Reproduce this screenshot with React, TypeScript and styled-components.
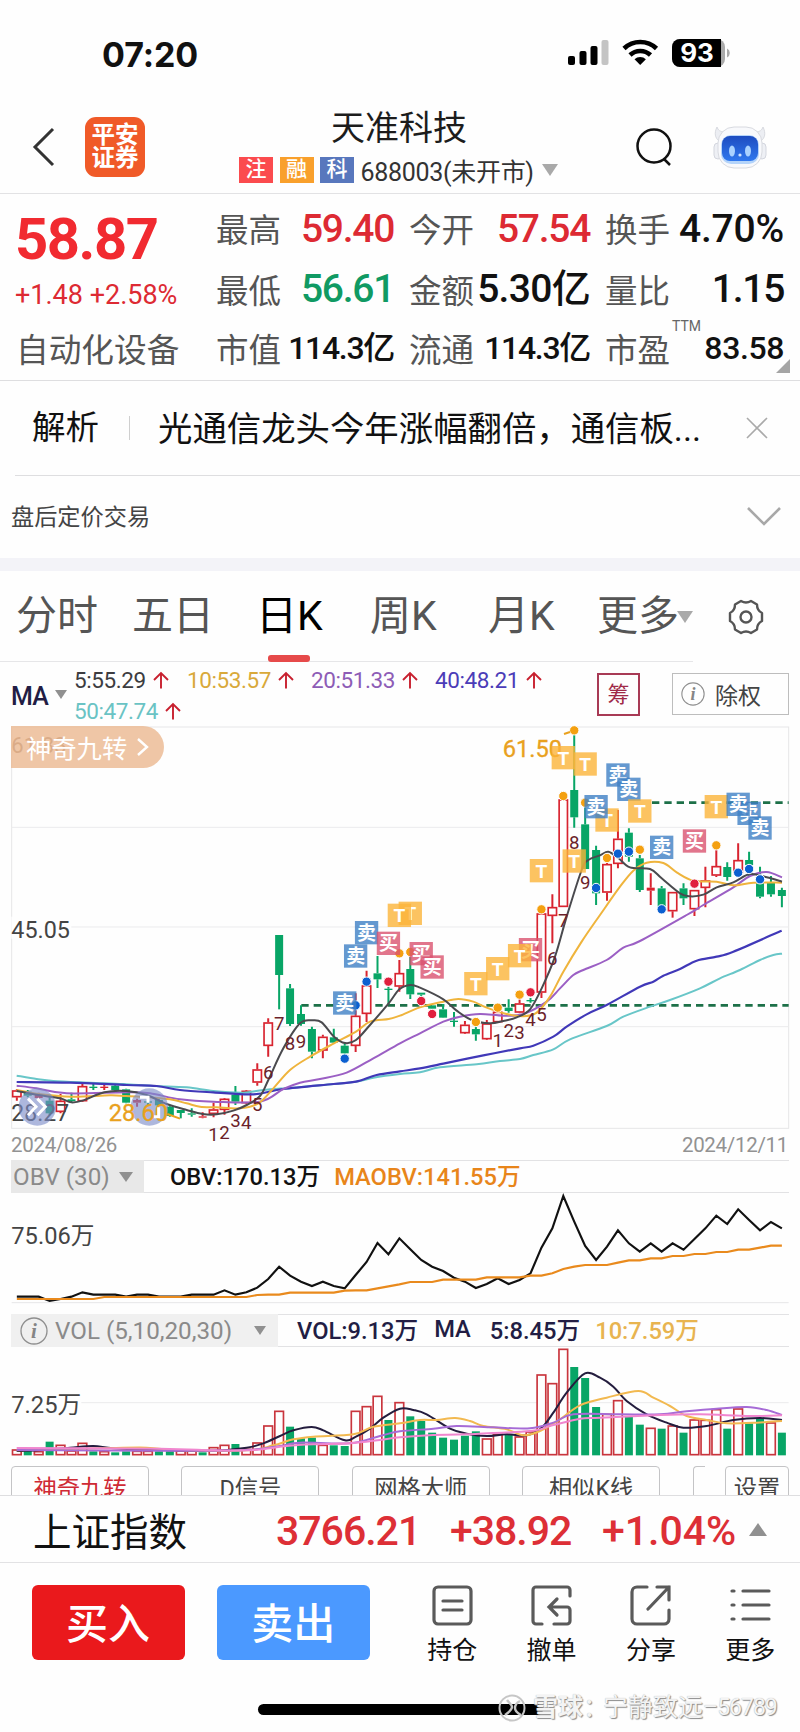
import { ReactNode } from 'react';
import styled, { createGlobalStyle } from 'styled-components';

const RED = '#d8232f';
const GREEN = '#08a566';

type Point = [number, number];
// kind, open/close body top, body bottom, wick top, wick bottom
type Candle = ['r' | 'g', number, number, number, number];

// charts are drawn in thirds of a pixel
const cx = (i: number) => 50.5 + 32.8 * i - i * 0.012;

const candles: Candle[] = [
  ['r', 1291, 1312, 1288, 1322],
  ['g', 1295, 1307, 1290, 1312],
  ['r', 1304, 1314, 1298, 1320],
  ['g', 1322, 1360, 1312, 1366],
  ['r', 1322, 1356, 1302, 1360],
  ['g', 1318, 1323, 1298, 1326],
  ['r', 1278, 1324, 1268, 1326],
  ['g', 1280, 1284, 1272, 1290],
  ['r', 1280, 1284, 1270, 1290],
  ['g', 1277, 1290, 1273, 1293],
  ['g', 1288, 1328, 1286, 1330],
  ['r', 1320, 1328, 1316, 1340],
  ['g', 1324, 1328, 1318, 1338],
  ['g', 1320, 1336, 1314, 1338],
  ['g', 1340, 1368, 1336, 1370],
  ['g', 1350, 1359, 1350, 1375],
  ['g', 1360, 1364, 1345, 1370],
  ['r', 1369, 1373, 1357, 1375],
  ['r', 1348, 1362, 1328, 1372],
  ['r', 1316, 1350, 1314, 1364],
  ['g', 1304, 1325, 1278, 1335],
  ['r', 1292, 1330, 1290, 1332],
  ['r', 1228, 1268, 1210, 1277],
  ['r', 1087, 1158, 1075, 1190],
  ['g', 825, 945, 825, 1048],
  ['g', 985, 1092, 972, 1098],
  ['g', 1062, 1092, 1036, 1097],
  ['g', 1107, 1175, 1100, 1195],
  ['r', 1130, 1172, 1124, 1195],
  ['g', 1132, 1148, 1106, 1150],
  ['g', 1157, 1180, 1150, 1196],
  ['r', 1067, 1158, 1000, 1176],
  ['r', 976, 1062, 932, 1086],
  ['g', 940, 958, 888, 984],
  ['g', 986, 990, 980, 1034],
  ['r', 939, 980, 900, 995],
  ['g', 927, 1003, 880, 1017],
  ['g', 998, 1004, 998, 1020],
  ['g', 1036, 1046, 1036, 1060],
  ['g', 1048, 1073, 1032, 1074],
  ['g', 1082, 1086, 1056, 1100],
  ['r', 1094, 1120, 1083, 1122],
  ['g', 1107, 1123, 1090, 1142],
  ['r', 1090, 1138, 1080, 1140],
  ['r', 1055, 1087, 1044, 1088],
  ['g', 1043, 1053, 1018, 1058],
  ['r', 1030, 1058, 1010, 1060],
  ['g', 1020, 1023, 1014, 1028],
  ['r', 760, 998, 760, 1014],
  ['r', 741, 768, 703, 850],
  ['r', 418, 741, 418, 741],
  ['g', 390, 472, 215, 503],
  ['g', 493, 627, 428, 627],
  ['g', 570, 700, 557, 735],
  ['r', 612, 698, 600, 722],
  ['r', 536, 612, 450, 625],
  ['g', 518, 590, 505, 605],
  ['g', 595, 690, 585, 696],
  ['r', 683, 692, 640, 735],
  ['g', 685, 740, 678, 748],
  ['r', 696, 754, 696, 773],
  ['g', 685, 715, 670, 735],
  ['r', 690, 748, 690, 768],
  ['r', 661, 684, 620, 742],
  ['r', 618, 647, 565, 651],
  ['g', 621, 651, 607, 662],
  ['r', 600, 640, 550, 642],
  ['g', 600, 615, 575, 650],
  ['g', 670, 710, 620, 715],
  ['g', 669, 703, 648, 710],
  ['g', 690, 708, 683, 742],
];

const ma5: Point[] = [
  [50, 1293], [115, 1305], [180, 1315], [214, 1327], [250, 1321], [313, 1297], [378, 1293], [440, 1305],
  [500, 1332], [560, 1350], [608, 1362], [650, 1363], [700, 1352], [740, 1335], [780, 1308], [805, 1260],
  [850, 1165], [900, 1090], [937, 1081], [965, 1087], [1002, 1130], [1035, 1149], [1068, 1140], [1110, 1095],
  [1166, 1030], [1198, 988], [1231, 975], [1260, 983], [1330, 1018], [1370, 1052], [1415, 1080], [1470, 1090],
  [1510, 1083], [1550, 1072], [1590, 1048], [1625, 985], [1665, 890], [1700, 770], [1745, 630], [1765, 600],
  [1800, 586], [1825, 575], [1855, 594], [1890, 622], [1950, 627], [1985, 655], [2040, 700], [2070, 709],
  [2110, 704], [2150, 682], [2200, 667], [2250, 642], [2300, 652], [2346, 665],
];
const ma10: Point[] = [
  [50, 1290], [115, 1302], [215, 1310], [330, 1306], [378, 1308], [450, 1312], [510, 1318], [560, 1330],
  [600, 1340], [650, 1342], [720, 1345], [775, 1330], [820, 1285], [870, 1230], [930, 1190], [1002, 1150],
  [1068, 1115], [1110, 1085], [1166, 1077], [1200, 1067], [1260, 1042], [1330, 1025], [1375, 1017], [1420, 1025],
  [1460, 1043], [1520, 1062], [1570, 1069], [1610, 1058], [1650, 1010], [1690, 935], [1745, 845], [1800, 765],
  [1860, 680], [1900, 632], [1940, 608], [1990, 609], [2030, 637], [2080, 662], [2150, 665], [2200, 676],
  [2260, 668], [2346, 668],
];
const ma20: Point[] = [
  [50, 1277], [110, 1285], [200, 1300], [380, 1297], [450, 1300], [540, 1318], [640, 1325], [780, 1325],
  [850, 1287], [900, 1268], [960, 1257], [1040, 1238], [1120, 1195], [1200, 1150], [1260, 1120], [1330, 1085],
  [1380, 1070], [1440, 1062], [1510, 1067], [1570, 1062], [1640, 1025], [1680, 985], [1720, 945], [1750, 930],
  [1820, 900], [1870, 863], [1920, 843], [2060, 765], [2110, 735], [2200, 682], [2250, 648], [2300, 636], [2346, 652],
];
const ma40: Point[] = [
  [50, 1266], [210, 1268], [380, 1275], [470, 1278], [540, 1290], [640, 1297], [760, 1303], [850, 1287],
  [1000, 1272], [1068, 1265], [1130, 1245], [1200, 1234], [1260, 1225], [1330, 1211], [1450, 1186], [1560, 1165],
  [1600, 1157], [1660, 1130], [1700, 1100], [1760, 1063], [1820, 1035], [1920, 980], [1960, 965], [1990, 947],
  [2040, 927], [2090, 902], [2150, 890], [2200, 875], [2345, 812],
];
const ma50: Point[] = [
  [50, 1247], [110, 1257], [160, 1263], [270, 1268], [370, 1272], [460, 1278], [560, 1282], [640, 1293],
  [730, 1298], [790, 1290], [880, 1283], [960, 1276], [1068, 1265], [1120, 1253], [1200, 1242], [1260, 1237],
  [1320, 1222], [1430, 1213], [1500, 1203], [1560, 1197], [1600, 1185], [1660, 1168], [1710, 1138], [1820, 1098],
  [1870, 1070], [1950, 1040], [2010, 1020], [2100, 985], [2160, 955], [2220, 930], [2280, 900], [2320, 885], [2346, 881],
];

const dots: [number, number, string][] = [
  [30, 1196, 'b'], [31, 1036, 'b'], [32, 965, 'b'], [34, 965, 'r'], [35, 880, 'y'], [36, 876, 'y'],
  [37, 1023, 'r'], [38, 1062, 'r'], [42, 1086, 'y'], [44, 1043, 'y'], [46, 1004, 'y'], [47, 997, 'r'],
  [48, 748, 'y'], [50, 408, 'y'], [51, 211, 'y'], [52, 428, 'y'], [53, 684, 'b'], [54, 594, 'y'],
  [55, 581, 'b'], [56, 575, 'b'], [57, 569, 'y'], [59, 748, 'b'], [62, 671, 'r'], [64, 556, 'y'],
  [66, 638, 'b'], [67, 627, 'b'], [68, 658, 'b'],
];
const dotColor: Record<string, string> = { b: '#0b5fd0', r: '#e01f3d', y: '#f4a010' };

const flags: [number, number, string][] = [
  [30, 1029, '卖'], [31, 888, '卖'], [32, 818, '卖'], [36, 760, 'T'], [35, 766, 'T'], [34, 850, '买'],
  [37, 881, '买'], [38, 921, '买'], [42, 971, 'T'], [44, 926, 'T'], [47, 869, '买'], [46, 887, 'T'],
  [48, 632, 'T'], [50, 293, 'T'], [51, 603, 'T'], [52, 312, 'T'], [54, 480, 'T'], [53, 440, '卖'],
  [55, 345, '卖'], [56, 388, '卖'], [57, 453, 'T'], [59, 562, '卖'], [62, 543, '买'], [64, 440, 'T'],
  [67, 460, '卖'], [66, 433, '卖'], [68, 504, '卖'],
];
const flagColor: Record<string, string> = { 卖: '#3f80c4', 买: '#d9536f', T: '#fbb43a' };

const counts: [number, number, number][] = [
  [18, 1424, 1], [19, 1417, 2], [20, 1380, 3], [21, 1387, 4], [22, 1332, 5], [23, 1238, 6], [24, 1091, 7],
  [25, 1150, 8], [26, 1143, 9], [44, 1141, 1], [45, 1110, 2], [46, 1116, 3], [47, 1078, 4], [48, 1062, 5],
  [49, 895, 6], [50, 780, 7], [51, 548, 8], [52, 668, 9],
];

const obv = [
  440, 440, 440, 453, 447, 440, 427, 434, 434, 434, 440, 434, 434, 440, 440, 440, 434, 434, 434, 421, 434, 427,
  413, 387, 350, 377, 395, 408, 395, 408, 415, 375, 336, 279, 313, 265, 298, 330, 350, 363, 383, 395, 414, 402,
  385, 402, 390, 370, 293, 235, 138, 215, 288, 330, 290, 241, 280, 305, 280, 305, 280, 299, 267, 235, 197, 222,
  178, 210, 241, 216, 235,
];
const maobv = [
  447, 447, 447, 447, 447, 447, 447, 447, 441, 441, 441, 441, 441, 441, 441, 441, 441, 441, 441, 441, 441, 441,
  435, 434, 434, 428, 428, 428, 428, 428, 422, 421, 421, 415, 409, 403, 396, 396, 396, 389, 389, 389, 389, 382,
  382, 382, 382, 377, 377, 370, 357, 350, 345, 345, 345, 338, 331, 331, 325, 325, 318, 318, 312, 312, 306, 306,
  299, 299, 293, 287, 287,
];

const volumes =
  'r902 g905 r907 g877 r888 r905 r882 g906 r907 g909 g906 r906 r906 g906 g906 r905 r905 g909 r895 r888 g884 r900 r881 r830 r786 g832 g867 g865 r888 g888 g890 r786 r772 r741 g812 r760 g801 g815 g850 g865 g871 g859 g846 r869 r855 g855 r863 r848 r677 r703 r600 g653 g686 g773 r795 r754 g802 g826 r837 g838 r830 g850 r812 r813 r781 g838 r779 g822 g807 r821 g850'
    .split(' ')
    .map((v) => ({ up: v[0] === 'r', top: Number(v.slice(1)) }));

const vol5: Point[] = [
  [50, 905], [115, 903], [210, 895], [280, 890], [340, 897], [460, 902], [640, 904], [740, 895], [790, 882],
  [840, 860], [880, 843], [935, 833], [970, 843], [1035, 873], [1068, 862], [1110, 838], [1150, 805], [1200, 778],
  [1240, 782], [1280, 795], [1350, 838], [1400, 853], [1460, 860], [1520, 855], [1580, 858], [1625, 835],
  [1660, 790], [1700, 730], [1755, 672], [1800, 685], [1840, 712], [1880, 755], [1940, 795], [2000, 820],
  [2050, 835], [2120, 830], [2200, 812], [2280, 806], [2346, 812],
];
const vol10: Point[] = [
  [50, 903], [300, 897], [440, 895], [540, 903], [740, 903], [820, 888], [880, 870], [940, 862], [1060, 855],
  [1120, 832], [1200, 822], [1260, 812], [1310, 812], [1365, 806], [1410, 815], [1450, 830], [1520, 840],
  [1570, 858], [1620, 845], [1680, 810], [1740, 768], [1820, 745], [1915, 725], [1960, 745], [2010, 770],
  [2060, 800], [2120, 812], [2180, 822], [2270, 820], [2346, 815],
];
const vol20: Point[] = [
  [50, 902], [540, 904], [740, 902], [840, 890], [900, 880], [1050, 882], [1140, 860], [1200, 846], [1300, 838],
  [1370, 830], [1480, 834], [1590, 837], [1660, 820], [1720, 795], [1860, 795], [1980, 795], [2060, 786],
  [2150, 778], [2240, 773], [2300, 782], [2346, 797],
];
const vol30: Point[] = [
  [50, 896], [480, 898], [640, 903], [760, 902], [860, 890], [940, 885], [1050, 882], [1140, 872], [1200, 864],
  [1300, 857], [1400, 855], [1590, 845], [1650, 830], [1740, 808], [1800, 805], [1980, 797], [2100, 795],
  [2250, 800], [2346, 798],
];

const smooth = (p: Point[]) => {
  let d = `M${p[0][0]} ${p[0][1]}`;
  for (let i = 0; i < p.length - 1; i++) {
    const a = p[i - 1] || p[i];
    const b = p[i];
    const c = p[i + 1];
    const e = p[i + 2] || c;
    d += `C${b[0] + (c[0] - a[0]) / 6} ${b[1] + (c[1] - a[1]) / 6} ${c[0] - (e[0] - b[0]) / 6} ${c[1] - (e[1] - b[1]) / 6} ${c[0]} ${c[1]}`;
  }
  return d;
};
const poly = (ys: number[]) => ys.map((y, i) => `${cx(i)},${y}`).join(' ');

const stats = [
  { label: '最高', value: '59.40', color: '#dd2a33' },
  { label: '今开', value: '57.54', color: '#dd2a33' },
  { label: '换手', value: '4.70%', spacing: -0.2 },
  { label: '最低', value: '56.61', color: '#109a63' },
  { label: '金额', value: '5.30亿', spacing: -0.7 },
  { label: '量比', value: '1.15' },
  { label: '市值', value: '114.3亿', small: true },
  { label: '流通', value: '114.3亿', small: true },
  { label: '市盈', value: '83.58', small: true, spacing: -0.4, sup: 'TTM' },
];

export default function App() {
  return (
    <Page>
      <GlobalStyle />
      <StatusBar>
        <Clock>07:20</Clock>
        <StatusIcons />
      </StatusBar>
      <Header>
        <svg width='24' height='40' viewBox='0 0 24 40' fill='none' stroke='#333' strokeWidth='3'>
          <path d='M21 2 3 20l18 18' />
        </svg>
        <Logo>
          平安
          <br />
          证券
        </Logo>
        <TitleBox>
          <Title>天准科技</Title>
          <SubTitle>
            <Tag $bg='#fb4b4e'>注</Tag>
            <Tag $bg='#f9a02c'>融</Tag>
            <Tag $bg='#5877bd'>科</Tag>
            <Code>688003(未开市)</Code>
            <Caret $size={8} />
          </SubTitle>
        </TitleBox>
        <HeaderTools>
          <SearchIcon />
          <Robot />
        </HeaderTools>
      </Header>

      <Quote>
        <QuoteLeft>
          <Price>58.87</Price>
          <Change>+1.48 +2.58%</Change>
          <Industry>自动化设备</Industry>
        </QuoteLeft>
        <StatGrid>
          {stats.map((s, i) => (
            <Stat key={i}>
              <StatLabel>
                {s.label}
                {s.sup && <Sup>{s.sup}</Sup>}
              </StatLabel>
              <StatValue $color={s.color} $small={s.small} $spacing={s.spacing}>
                {s.value}
              </StatValue>
            </Stat>
          ))}
        </StatGrid>
        <Corner />
      </Quote>

      <News>
        <NewsLabel>解析</NewsLabel>
        <NewsText>光通信龙头今年涨幅翻倍，通信板...</NewsText>
        <svg width='22' height='22' viewBox='0 0 22 22' stroke='#aaa' strokeWidth='1.6'>
          <path d='M1 1l20 20M21 1 1 21' />
        </svg>
      </News>
      <AfterHours>
        <span>盘后定价交易</span>
        <svg width='34' height='20' viewBox='0 0 34 20' fill='none' stroke='#a8a8a8' strokeWidth='2.6'>
          <path d='M1 1l16 16L33 1' />
        </svg>
      </AfterHours>

      <Tabs>
        <Tab $w={116}>分时</Tab>
        <Tab $w={124}>五日</Tab>
        <Tab $w={114} $active>
          日K
        </Tab>
        <Tab $w={118}>周K</Tab>
        <Tab $w={109}>月K</Tab>
        <Tab $w={80}>更多</Tab>
        <Caret $size={8} />
        <Gear />
      </Tabs>

      <MaRow>
        <MaName>MA</MaName>
        <Caret $size={6} $dark />
        <MaList>
          <MaItem $color='#3c3c40' $w={113}>5:55.29<Arrow /></MaItem>
          <MaItem $color='#d9a93a' $w={124}>10:53.57<Arrow /></MaItem>
          <MaItem $color='#8d5cb6' $w={124}>20:51.33<Arrow /></MaItem>
          <MaItem $color='#4b3cb8' $w={110}>40:48.21<Arrow /></MaItem>
          <MaItem $color='#6ac3c4' $w={114}>50:47.74<Arrow /></MaItem>
        </MaList>
        <ChipButton>筹</ChipButton>
        <RightsButton>
          <Info size={24} />
          除权
        </RightsButton>
      </MaRow>

      <ChartBox>
        <KChart />
        <Pill>
          神奇九转
          <svg width='12' height='20' viewBox='0 0 12 20' fill='none' stroke='#fff' strokeWidth='2.4'>
            <path d='M1 2l9 8-9 8' />
          </svg>
        </Pill>
      </ChartBox>
      <Dates>
        <span>2024/08/26</span>
        <span>2024/12/11</span>
      </Dates>

      <IndicatorBar>
        <IndicatorName $w={133} $bg='#e8e8e8'>
          <NameText $x={2} $w={106}>OBV (30)</NameText>
          <Caret $size={7} $dark />
        </IndicatorName>
        <IndicatorValue $color='#111' $ml={26}>OBV:170.13万</IndicatorValue>
        <IndicatorValue $color='#e8851a' $ml={14}>MAOBV:141.55万</IndicatorValue>
      </IndicatorBar>
      <ObvChart />
      <IndicatorBar>
        <IndicatorName $w={267} $bg='#f0f0f0'>
          <InfoWrap><Info size={28} /></InfoWrap>
          <NameText $x={7} $w={199}>VOL (5,10,20,30)</NameText>
          <Caret $size={6} $dark />
        </IndicatorName>
        <IndicatorValue $color='#221d44' $ml={19}>VOL:9.13万</IndicatorValue>
        <IndicatorValue $color='#221d44' $ml={16}>MA</IndicatorValue>
        <IndicatorValue $color='#221d44' $ml={19}>5:8.45万</IndicatorValue>
        <IndicatorValue $color='#e8b450' $ml={15}>10:7.59万</IndicatorValue>
      </IndicatorBar>
      <VolChart />

      <Shortcuts>
        <Shortcut $red>神奇九转</Shortcut>
        <Shortcut>D信号</Shortcut>
        <Shortcut>网格大师</Shortcut>
        <Shortcut>相似K线</Shortcut>
        <ShortcutCut />
        <Shortcut $w={64}>设置</Shortcut>
      </Shortcuts>

      <IndexBar>
        <IndexName>上证指数</IndexName>
        <IndexValue $w={174}>3766.21</IndexValue>
        <IndexValue $w={152}>+38.92</IndexValue>
        <IndexValue $w={147} $wide>
          +1.04%
        </IndexValue>
        <Caret $size={9} $up $dark />
      </IndexBar>

      <Actions>
        <TradeButton $bg='#ea191c'>买入</TradeButton>
        <TradeButton $bg='#4b99ff'>卖出</TradeButton>
        <ActionList>
          <Action label='持仓'>
            <rect x='2' y='2' width='37' height='37' rx='4' />
            <path d='M11 16h19M11 25h19' />
          </Action>
          <Action label='撤单'>
            <path d='M39 11V5a3 3 0 0 0-3-3H5a3 3 0 0 0-3 3v31a3 3 0 0 0 3 3h6M26 14l-8 8 8 8M18 22h18a3 3 0 0 1 3 3v11a3 3 0 0 1-3 3H23' />
          </Action>
          <Action label='分享'>
            <path d='M17 2H7a5 5 0 0 0-5 5v27a5 5 0 0 0 5 5h27a5 5 0 0 0 5-5V25M18 24 39 2M27 2h12v13' />
          </Action>
          <Action label='更多'>
            <path d='M2 6h2M13 6h26M2 20h2M13 20h26M2 34h2M13 34h26' />
          </Action>
        </ActionList>
      </Actions>

      <Footer>
        <HomeBar />
        <Watermark>
          <svg width='30' height='28' viewBox='0 0 30 28' fill='none' stroke='#c6c6c6' strokeWidth='2'>
            <circle cx='14' cy='14' r='12.5' />
            <path d='M9 6c2 3 5 4 5 7s-3 5-7 8M22 7c-4 2-5 4-5 7s2 5 6 7' strokeWidth='2.4' />
          </svg>
          <b>雪球</b>：<em>宁静致远</em>
          <small>–56789</small>
        </Watermark>
      </Footer>
    </Page>
  );
}

const StatusIcons = () => (
  <svg width='164' height='30' viewBox='0 0 164 30'>
    <rect x='1' y='17' width='7' height='9' rx='2' />
    <rect x='12.5' y='12' width='7' height='14' rx='2' />
    <rect x='23.5' y='7' width='7' height='19' rx='2' />
    <rect x='34.5' y='1' width='7' height='25' rx='2' fill='#c4c4c4' />
    <g fill='none' stroke='#000' strokeWidth='4.6'>
      <path d='M57 9.5a23.5 23.5 0 0 1 32.5 0' />
      <path d='M63 16a15 15 0 0 1 20.5 0' />
    </g>
    <path d='M73.2 26l-5.7-5.8a8.2 8.2 0 0 1 11.4 0z' />
    <rect x='105' y='0' width='53' height='28' rx='8' fill='#aaa' />
    <path d='M113 0h41v28h-41a8 8 0 0 1-8-8V8a8 8 0 0 1 8-8z' />
    <path d='M160 9.5a5 5 0 0 1 0 9z' fill='#aaa' />
    <text x='130' y='23' fontSize='26' fontWeight='700' fill='#fff' textAnchor='middle' fontFamily='Inter'>
      93
    </text>
  </svg>
);

const SearchIcon = () => (
  <svg width='38' height='42' viewBox='0 0 38 42' fill='none' stroke='#111' strokeWidth='2.5'>
    <circle cx='18' cy='20' r='16.5' />
    <path d='M28 33l6 6' />
  </svg>
);

const Robot = () => (
  <svg width='54' height='44' viewBox='0 0 54 44'>
    <defs>
      <linearGradient id='face' x1='0' y1='0' x2='0' y2='1'>
        <stop offset='0' stopColor='#1d4cc0' />
        <stop offset='1' stopColor='#2f78ee' />
      </linearGradient>
    </defs>
    <path d='M4 2c-3 6-2 11 2 14l6-9C7 7 5 5 4 2zM50 2c3 6 2 11-2 14l-6-9c5 0 7-2 8-5z' fill='#eceef3' stroke='#d8dae0' />
    <rect x='1' y='18' width='8' height='16' rx='4' fill='#eef0f5' stroke='#d3d6de' />
    <rect x='45' y='18' width='8' height='16' rx='4' fill='#eef0f5' stroke='#d3d6de' />
    <rect x='5' y='2' width='44' height='41' rx='16' fill='#f8f9fc' stroke='#d8dae0' />
    <rect x='8' y='10' width='38' height='29' rx='10' fill='#b4d4fa' />
    <rect x='9' y='11' width='36' height='25' rx='8' fill='url(#face)' />
    <ellipse cx='19' cy='26' rx='3' ry='5.5' fill='#a9d2ff' />
    <ellipse cx='35' cy='26' rx='3' ry='5.5' fill='#a9d2ff' />
    <circle cx='27' cy='30' r='1.6' fill='#cfe4ff' />
  </svg>
);

const Gear = () => (
  <GearSvg width='38' height='38' viewBox='0 0 38 38' fill='none' stroke='#555' strokeWidth='2.4' strokeLinejoin='round'>
    <path d='M14 3q5 3 10 0l6 3.5q0 6 5 8.5v8q-5 2.5-5 8.5L24 35q-5-3-10 0l-6-3.5q0-6-5-8.5v-8q5-2.5 5-8.5z' />
    <circle cx='19' cy='19' r='5.5' />
  </GearSvg>
);

const Arrow = () => (
  <svg width='16' height='18' viewBox='0 0 16 18' fill='none' stroke='#c8202f' strokeWidth='1.9'>
    <path d='M8 17.5V2M1 9 8 2l7 7' />
  </svg>
);

const Info = ({ size }: { size: number }) => (
  <svg width={size} height={size} viewBox='0 0 28 28' fill='none' stroke='#8f8f8f'>
    <circle cx='14' cy='14' r='13' strokeWidth='1.3' />
    <text x='14' y='21' fontSize='21' fontStyle='italic' fontWeight='700' textAnchor='middle' fontFamily='Liberation Serif' fill='#858585' stroke='none'>
      i
    </text>
  </svg>
);

const Action = ({ label, children }: { label: string; children: ReactNode }) => (
  <ActionItem>
    <svg width='41' height='41' viewBox='0 0 41 41' fill='none' stroke='#5a5a5a' strokeWidth='3.2' strokeLinecap='round'>
      {children}
    </svg>
    {label}
  </ActionItem>
);

const KChart = () => (
  <ChartSvg width='800' height='404' viewBox='0 198 2400 1212' fill='none'>
    <rect x='35' y='201' width='2331' height='1204' stroke='#e6e6e8' strokeWidth='3' />
    <path d='M35 502H2366M35 801H2366M35 1100H2366' stroke='#ebebed' strokeWidth='3' />
    <text x='34' y='280' fontSize='66' fill='#8a6a55'>61.83</text>
    <rect x='34' y='770' width='180' height='66' fill='#fefefe' />
    <text x='34' y='833' fontSize='70' fill='#444'>45.05</text>
    <path d='M904 1036H2366M1956 428H2366' stroke='#1d7048' strokeWidth='8' strokeDasharray='22 15' />
    {candles.map(([kind, top, bottom, high, low], i) => {
      const up = kind === 'r';
      const solid = !up || bottom - top < 12;
      return (
        <g key={i} stroke={up ? RED : GREEN}>
          <path d={`M${cx(i)} ${high}V${top}M${cx(i)} ${bottom}V${low}`} strokeWidth='6' />
          <rect
            x={cx(i) - (solid ? 12 : 12.5)}
            y={top + (solid ? 0 : 2)}
            width={solid ? 24 : 25}
            height={Math.max(bottom - top - (solid ? 0 : 4), 4)}
            fill={solid ? (up ? RED : GREEN) : '#fefefe'}
            strokeWidth={solid ? 0 : 5}
          />
        </g>
      );
    })}
    <g strokeWidth='6'>
      <path d={smooth(ma50)} stroke='#68c6c8' />
      <path d={smooth(ma40)} stroke='#4038b8' strokeWidth='6.5' />
      <path d={smooth(ma20)} stroke='#9b5fc4' />
      <path d={smooth(ma10)} stroke='#efb43c' />
      <path d={smooth(ma5)} stroke='#4a4a4e' />
    </g>
    {dots.map(([i, y, c]) => (
      <circle key={i} cx={cx(i)} cy={y} r='14' fill={dotColor[c]} stroke='#fff' strokeWidth='3' />
    ))}
    <text x='1508' y='290' fontSize='71' fill='#e9a11e' stroke='#e9a11e' strokeWidth='1'>61.50</text>
    <path d='M1692 222l18-6' stroke='#e9a11e' strokeWidth='6' />
    {flags.map(([i, y, t]) => (
      <g key={i}>
        <rect x={cx(i) - 35} y={y - 35} width='70' height='70' fill={flagColor[t]} opacity='.8' />
        <text x={cx(i)} y={y + 21} fontSize='57' fontWeight='700' fill='#fff' textAnchor='middle'>
          {t}
        </text>
      </g>
    ))}
    <text x='34' y='1382' fontSize='69' fill='#444'>28.27</text>
    <g fill='#7d8dc9' opacity='.62'>
      <circle cx='112' cy='1341' r='56' />
      <circle cx='448' cy='1341' r='56' />
    </g>
    <text x='326' y='1382' fontSize='71' fill='#e9a11e' stroke='#e9a11e' strokeWidth='1'>28.60</text>
    <path d='M502 1362l38 14' stroke='#e9a11e' strokeWidth='6' />
    <path d='M84 1316l24 24-24 26M112 1316l24 24-24 26' stroke='#fff' strokeWidth='9' />
    <path d='M420 1312h24v16M462 1370h14v-28' stroke='#fff' strokeWidth='9' />
    {counts.map(([i, y, n]) => (
      <text key={i} x={cx(i)} y={y + 20} fontSize='56' fill='#6b1f2a' textAnchor='middle'>
        {n}
      </text>
    ))}
  </ChartSvg>
);

const ObvChart = () => (
  <ChartSvg width='800' height='121' viewBox='0 129 2400 363' fill='none'>
    <path d='M35 458H2366' stroke='#e6e6e8' strokeWidth='3' />
    <text x='34' y='281' fontSize='71' fill='#444'>75.06万</text>
    <polyline points={poly(obv)} stroke='#111' strokeWidth='6.5' />
    <polyline points={poly(maobv)} stroke='#e98a1d' strokeWidth='6.5' />
  </ChartSvg>
);

const VolChart = () => (
  <ChartSvg width='800' height='109' viewBox='0 593 2400 327' fill='none'>
    <path d='M35 760H2366' stroke='#ebebed' strokeWidth='3' />
    <rect x='34' y='735' width='210' height='60' fill='#fefefe' />
    <text x='34' y='790' fontSize='71' fill='#444'>7.25万</text>
    {volumes.map((v, i) => (
      <rect
        key={i}
        x={cx(i) - (v.up ? 13 : 12)}
        y={v.top}
        width={v.up ? 26 : 24}
        height={(v.up ? 916 : 918) - v.top}
        fill={v.up ? '#fefefe' : GREEN}
        stroke={v.up ? '#c9353d' : 'none'}
        strokeWidth='5'
      />
    ))}
    <g strokeWidth='6'>
      <path d={smooth(vol5)} stroke='#241d3e' />
      <path d={smooth(vol10)} stroke='#f2b950' />
      <path d={smooth(vol20)} stroke='#a66bd6' />
      <path d={smooth(vol30)} stroke='#f086cf' />
    </g>
  </ChartSvg>
);

const GlobalStyle = createGlobalStyle`
  * {
    box-sizing: border-box;
  }
  body {
    margin: 0;
    background: #fefefe;
    font-family: Roboto, 'Noto Sans CJK SC', sans-serif;
    color: #111;
  }
  svg {
    flex: none;
    display: block;
  }
`;

const Page = styled.div`
  width: 800px;
  height: 1732px;
  overflow: hidden;
  white-space: nowrap;
`;
const StatusBar = styled.div`
  height: 100px;
  padding: 8px 69px 0 102px;
  display: flex;
  align-items: center;
  justify-content: space-between;
`;
const Clock = styled.div`
  font-family: Inter, sans-serif;
  font-weight: 700;
  font-size: 34px;
  letter-spacing: -0.1px;
`;
const Header = styled.div`
  height: 94px;
  padding-left: 32px;
  display: flex;
  align-items: center;
  border-bottom: 1px solid #e2e2e4;
`;
const Logo = styled.div`
  width: 60px;
  height: 60px;
  margin-left: 29px;
  border-radius: 11px;
  background: #f05a28;
  color: #fff;
  font-weight: 700;
  font-size: 23.5px;
  line-height: 23px;
  padding-top: 7px;
  text-align: center;
`;
const TitleBox = styled.div`
  width: 318px;
  margin-left: 94px;
  display: flex;
  flex-direction: column;
  align-items: flex-start;
`;
const Title = styled.div`
  font-size: 34px;
  line-height: 44px;
  margin-left: 92px;
  padding-top: 2px;
  color: #1c1c1c;
`;
const SubTitle = styled.div`
  display: flex;
  align-items: center;
  height: 39px;
`;
const Tag = styled.div<{ $bg: string }>`
  width: 34px;
  height: 26px;
  margin-right: 6.5px;
  background: ${(p) => p.$bg};
  color: #fff;
  font-size: 21px;
  line-height: 25px;
  font-weight: 500;
  text-align: center;
`;
const Code = styled.div`
  font-size: 25px;
  letter-spacing: -0.3px;
  color: #333;
  margin-right: 8px;
`;
const HeaderTools = styled.div`
  display: flex;
  align-items: center;
  gap: 39px;
  margin-left: 79px;
`;
const Caret = styled.i<{ $size: number; $up?: boolean; $dark?: boolean }>`
  flex: none;
  width: 0;
  height: 0;
  border: ${(p) => p.$size}px solid transparent;
  border-${(p) => (p.$up ? 'bottom' : 'top')}: ${(p) => p.$size * 1.5}px solid ${(p) => (p.$dark ? '#909090' : '#a9a9a9')};
  border-${(p) => (p.$up ? 'top' : 'bottom')}: 0;
`;

const Quote = styled.div`
  position: relative;
  height: 187px;
  display: flex;
  border-bottom: 1px solid #dedee0;
`;
const QuoteLeft = styled.div`
  width: 217px;
  padding-left: 15px;
`;
const Price = styled.div`
  margin-top: 10px;
  font-size: 58px;
  line-height: 70px;
  font-weight: 700;
  letter-spacing: -1.5px;
  color: #f12a30;
`;
const Change = styled.div`
  font-size: 27px;
  line-height: 42px;
  color: #dd2a33;
`;
const Industry = styled.div`
  margin-top: 11px;
  font-size: 32.7px;
  line-height: 48px;
  margin-left: 1px;
  color: #555;
`;
const StatGrid = styled.div`
  width: 567px;
  display: grid;
  grid-template-columns: 176px 179px 179px;
  grid-template-rows: 61px 60px 58px;
  column-gap: 17px;
  padding-top: 3px;
`;
const Stat = styled.div`
  display: flex;
  align-items: center;
  justify-content: space-between;
  margin: 0 -1px;
  &:nth-child(3n) {
    margin-right: 1px;
  }
`;
const StatLabel = styled.div`
  position: relative;
  font-size: 32.5px;
  color: #555;
`;
const Sup = styled.span`
  position: absolute;
  top: -6px;
  left: 67px;
  font-size: 14px;
  color: #666;
`;
const StatValue = styled.div<{ $color?: string; $small?: boolean; $spacing?: number }>`
  padding-top: 2px;
  font-size: ${(p) => (p.$small ? 32 : 39)}px;
  line-height: 44px;
  font-weight: 500;
  letter-spacing: ${(p) => p.$spacing ?? -1.3}px;
  color: ${(p) => p.$color || '#111'};
`;
const Corner = styled.i`
  position: absolute;
  right: 10px;
  bottom: 7px;
  border: 7px solid #a5a5a5;
  border-left-color: transparent;
  border-top-color: transparent;
`;

const News = styled.div`
  height: 95px;
  margin-left: 15px;
  padding: 0 32px 0 17px;
  display: flex;
  align-items: center;
  justify-content: space-between;
  border-bottom: 1px solid #dedee0;
`;
const NewsLabel = styled.div`
  font-size: 33.5px;
  width: 98px;
  line-height: 24px;
  border-right: 1px solid #cfcfcf;
`;
const NewsText = styled.div`
  width: 602px;
  padding: 0 0 4px 21px;
  font-size: 34.4px;
`;
const AfterHours = styled.div`
  height: 95px;
  padding: 0 19px 0 11px;
  display: flex;
  align-items: center;
  justify-content: space-between;
  font-size: 23.2px;
  color: #444;
  border-bottom: 13px solid #f3f3f8;
  span {
    padding-bottom: 4px;
  }
`;

const Tabs = styled.div`
  height: 91px;
  padding-left: 16px;
  display: flex;
  align-items: center;
  background: linear-gradient(#e6e6e8, #e6e6e8) 0 100% / 693px 1px no-repeat;
`;
const Tab = styled.div<{ $w: number; $active?: boolean }>`
  position: relative;
  width: ${(p) => p.$w}px;
  font-size: 41px;
  line-height: 91px;
  color: ${(p) => (p.$active ? '#000' : '#555')};
  ${(p) =>
    p.$active &&
    `&::after {
    content: '';
    position: absolute;
    left: 12px;
    bottom: 0;
    width: 42px;
    height: 7px;
    border-radius: 3px;
    background: #e64a4a;
  }`}
`;
const GearSvg = styled.svg`
  margin-left: 34px;
`;

const MaRow = styled.div`
  height: 64px;
  padding: 0 11px;
  display: flex;
  align-items: center;
`;
const MaName = styled.div`
  width: 44px;
  font-size: 25px;
  font-weight: 500;
  padding-top: 4px;
  letter-spacing: -0.8px;
  color: #221d44;
`;
const MaList = styled.div`
  width: 523px;
  margin-left: 7px;
  align-self: flex-start;
  padding-top: 2px;
  display: flex;
  flex-wrap: wrap;
`;
const MaItem = styled.div<{ $color: string; $w: number }>`
  width: ${(p) => p.$w}px;
  height: 31.5px;
  display: flex;
  align-items: center;
  gap: 7px;
  font-size: 22.5px;
  letter-spacing: -0.4px;
  color: ${(p) => p.$color};
`;
const ChipButton = styled.div`
  width: 43px;
  height: 43px;
  border: 2px solid #a83a55;
  color: #a02a48;
  font-size: 22px;
  line-height: 39px;
  text-align: center;
`;
const RightsButton = styled.div`
  width: 117px;
  height: 42px;
  margin-left: 32px;
  padding-left: 8px;
  display: flex;
  align-items: center;
  gap: 10px;
  border: 1.5px solid #bdbdbd;
  font-size: 23px;
  color: #444;
`;

const ChartBox = styled.div`
  position: relative;
`;
const ChartSvg = styled.svg`
  overflow: visible;
  font-family: Roboto, 'Noto Sans CJK SC', sans-serif;
`;
const Pill = styled.div`
  position: absolute;
  left: 11px;
  top: 0;
  width: 153px;
  height: 42px;
  padding-left: 15px;
  display: flex;
  align-items: center;
  gap: 10px;
  border-radius: 0 21px 21px 0;
  background: rgba(236, 186, 146, 0.82);
  color: #fff;
  font-size: 25.3px;
`;
const Dates = styled.div`
  height: 30px;
  padding: 0 12px 0 11px;
  display: flex;
  justify-content: space-between;
  font-size: 20.5px;
  letter-spacing: -0.3px;
  line-height: 31px;
  color: #929292;
`;

const IndicatorBar = styled.div`
  height: 33px;
  margin: 0 11px;
  display: flex;
  align-items: center;
  border-top: 1px solid #e2e2e4;
  border-bottom: 1px solid #e2e2e4;
`;
const IndicatorName = styled.div<{ $w: number; $bg: string }>`
  width: ${(p) => p.$w}px;
  height: 33px;
  display: flex;
  align-items: center;
  background: ${(p) => p.$bg};
`;
const NameText = styled.div<{ $x: number; $w: number }>`
  width: ${(p) => p.$w}px;
  margin-left: ${(p) => p.$x}px;
  font-size: 24.2px;
  color: #8a8a8a;
`;
const InfoWrap = styled.div`
  margin-left: 9px;
`;
const IndicatorValue = styled.div<{ $color: string; $ml: number }>`
  margin: -3px 0 0 ${(p) => p.$ml}px;
  font-size: 23.7px;
  font-weight: 500;
  color: ${(p) => p.$color};
`;

const Shortcuts = styled.div`
  height: 40px;
  padding: 10px 11px 0;
  display: flex;
  justify-content: space-between;
  overflow: hidden;
  border-bottom: 1px solid #dedee0;
`;
const Shortcut = styled.div<{ $red?: boolean; $w?: number }>`
  width: ${(p) => p.$w || 138}px;
  height: 48px;
  border: 1px solid #c4c4c6;
  border-radius: 4px;
  font-size: 23.3px;
  line-height: 44px;
  text-align: center;
  color: ${(p) => (p.$red ? '#cf2a34' : '#444')};
`;
const ShortcutCut = styled.div`
  width: 12px;
  height: 48px;
  margin-right: -12px;
  border: 1px solid #c4c4c6;
  border-width: 1px 0 0 1px;
  border-radius: 4px 0 0 0;
`;

const IndexBar = styled.div`
  height: 67px;
  padding-left: 33px;
  display: flex;
  align-items: center;
  border-bottom: 1px solid #e2e2e4;
`;
const IndexName = styled.div`
  width: 243px;
  font-size: 38.5px;
`;
const IndexValue = styled.div<{ $w: number; $wide?: boolean }>`
  width: ${(p) => p.$w}px;
  padding-top: 4px;
  font-size: 41px;
  font-weight: 500;
  letter-spacing: ${(p) => (p.$wide ? 0 : -1)}px;
  color: #dd2f36;
`;

const Actions = styled.div`
  height: 120px;
  padding: 22px 0 0 32px;
  display: flex;
  align-items: flex-start;
`;
const TradeButton = styled.div<{ $bg: string }>`
  width: 154px;
  height: 75px;
  margin-right: 32px;
  border-radius: 6px;
  background: ${(p) => p.$bg};
  color: #fff;
  font-size: 42px;
  font-weight: 500;
  line-height: 79px;
  text-indent: -1px;
  text-align: center;
`;
const ActionList = styled.div`
  display: flex;
`;
const ActionItem = styled.div`
  width: 99.4px;
  display: flex;
  flex-direction: column;
  align-items: center;
  font-size: 25px;
  line-height: 50px;
`;

const Footer = styled.div`
  position: relative;
  height: 50px;
  padding-top: 21px;
`;
const HomeBar = styled.div`
  width: 285px;
  height: 11px;
  margin-left: 258px;
  border-radius: 6px;
  background: #000;
`;
const Watermark = styled.div`
  position: absolute;
  left: 498px;
  top: 10px;
  display: flex;
  align-items: center;
  font-size: 25px;
  line-height: 30px;
  color: #f4f4f4;
  text-shadow: 1px 1px 1px #8b8b8b, 0 0 1px #aaa;
  b {
    margin-left: 5px;
  }
  em {
    font-style: normal;
    margin-left: -5px;
  }
  small {
    font-size: 23px;
    letter-spacing: -1px;
  }
`;
